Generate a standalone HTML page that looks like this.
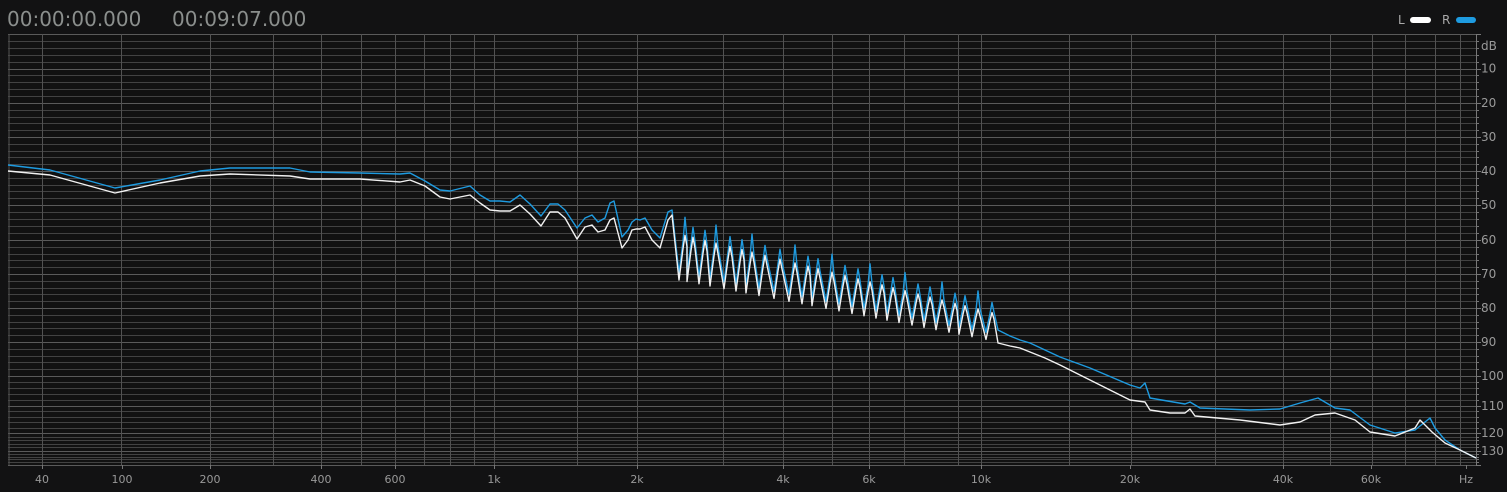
<!DOCTYPE html>
<html><head><meta charset="utf-8"><style>
html,body{margin:0;padding:0;background:#121213;width:1507px;height:492px;overflow:hidden;font-family:"DejaVu Sans","Liberation Sans",sans-serif}
.t{position:absolute;top:7px;font-size:20px;color:#8b8f8d;font-family:"DejaVu Sans",sans-serif}
</style></head><body>
<div class="t" style="left:7px">00:00:00.000</div>
<div class="t" style="left:172px">00:09:07.000</div>
<svg id="s" width="1507" height="492" style="position:absolute;left:0;top:0"></svg>
<script>
const s=document.getElementById('s');let h='';
const dbm=[[0,34],[10,68.5],[20,103],[30,137],[40,171],[50,205],[60,240],[70,274],[80,308],[90,342],[100,376],[110,406],[120,433],[130,451],[140,465]];
function dy(d){for(let i=0;i<dbm.length-1;i++){const[a,b]=dbm[i],[c,e]=dbm[i+1];if(d<=c)return b+(e-b)*(d-a)/(c-a);}return 465;}
h+='<rect x="8" y="34" width="1468" height="431" fill="#111111"/>';
for(let d=0;d<=140;d+=2){const y=Math.round(dy(d))+.5;h+=`<line x1="8" x2="1476" y1="${y}" y2="${y}" stroke="${d%10==0?'#5a5a5a':'#424242'}" stroke-width="1"/>`;}
[8.5,42,121,210,273,321,361,395,424,450,474,494,577,637,723,783,832,869,904,958,981,1069,1131,1215,1283,1330,1372,1405,1435,1460].forEach(x=>{h+=`<line x1="${x+.5}" x2="${x+.5}" y1="34" y2="465" stroke="#525252"/>`});
h+='<line x1="1476.5" x2="1476.5" y1="34" y2="465" stroke="#777"/>';
for(let d=0;d<=140;d+=2){const y=Math.round(dy(d))+.5;h+=`<line x1="1476" x2="${d%10==0?1481:1479}" y1="${y}" y2="${y}" stroke="#777"/>`;}
h+='<text x="1481" y="50" fill="#9a9a9a" font-size="12">dB</text>';
for(let d=10;d<=130;d+=10)h+=`<text x="1481" y="${dy(d)+4}" fill="#9a9a9a" font-size="12">${d}</text>`;
[[42,'40'],[122,'100'],[210,'200'],[321,'400'],[395,'600'],[494,'1k'],[637,'2k'],[783,'4k'],[869,'6k'],[981,'10k'],[1130,'20k'],[1283,'40k'],[1371,'60k'],[1466,'Hz']].forEach(([x,t])=>{h+=`<text x="${x}" y="483" fill="#999" font-size="11" text-anchor="middle">${t}</text>`;h+=`<line x1="${x+.5}" x2="${x+.5}" y1="465" y2="469" stroke="#777"/>`});
h+='<text x="1398" y="24" fill="#aaa" font-size="12">L</text><rect x="1410" y="17" width="21" height="6" rx="3" fill="#fff"/>';
h+='<text x="1442" y="24" fill="#aaa" font-size="12">R</text><rect x="1456" y="17" width="20" height="6" rx="3" fill="#1e9be0"/>';
const wA=[[8,171],[50,175],[115,193],[160,183],[200,176],[230,174],[290,176],[310,179],[360,179],[400,182],[410,180],[425,186],[440,197],[450,199],[470,195],[480,203],[490,210],[500,211],[510,211],[520,205],[530,214],[541,226],[550,212],[558,212],[565,218],[577,239],[585,227],[592,225],[598,232],[605,230],[610,220],[614,218],[622,248],[628,240],[632,230],[636,229],[640,229],[645,227],[652,240],[660,248],[668,220],[672,215]];
const bA=[[8,165],[50,170],[115,188],[160,180],[200,171],[230,168],[290,168],[310,172],[360,173],[400,174],[410,173],[425,181],[440,190],[450,191],[470,186],[480,195],[490,201],[500,201],[510,202],[520,195],[530,204],[541,216],[550,204],[558,204],[565,210],[577,228],[585,218],[592,215],[598,222],[605,218],[610,203],[614,201],[622,237],[628,230],[632,222],[636,219],[640,220],[645,218],[652,230],[660,238],[668,212],[672,210]];
const pk=[685,693,705,716,730,742,752,765,780,795,808,818,832,845,858,870,882,893,905,918,930,942,955,965,978,992];
const wB=[],bB=[];
for(let i=0;i<pk.length;i++){const x=pk[i],f=(x-680)/310;const tr=275+60*f,ph=45-18*f;const xt=x-6;
wB.push([xt,tr+4]);wB.push([x-2,tr+4-ph*0.7]);wB.push([x,tr+4-ph]);wB.push([x+2,tr+4-ph*0.75]);
bB.push([xt,tr-3]);bB.push([x-2,tr-3-ph*0.7]);bB.push([x,tr-6-ph-(i%3==0?8:0)]);bB.push([x+2,tr-3-ph*0.75]);}
const wC=[[998,343],[1010,346],[1020,348],[1030,352],[1045,358],[1060,365],[1090,380],[1110,390],[1130,400],[1145,402],[1150,410],[1170,413],[1185,413],[1190,409],[1195,416],[1240,420],[1280,425],[1300,422],[1315,415],[1335,413],[1355,420],[1370,432],[1395,436],[1415,428],[1420,420],[1432,432],[1445,443],[1460,450],[1476,458]];
const bC=[[998,330],[1010,336],[1020,340],[1030,343],[1045,350],[1060,357],[1090,368],[1130,385],[1140,388],[1145,383],[1150,398],[1185,404],[1190,402],[1200,408],[1250,410],[1280,409],[1300,403],[1318,398],[1335,408],[1350,410],[1370,425],[1395,433],[1415,430],[1430,418],[1435,428],[1445,440],[1460,450],[1476,458]];
const P=a=>a.map(p=>p[0]+','+p[1].toFixed(1)).join(' ');
h+=`<polyline points="${P([...bA,...bB,...bC])}" fill="none" stroke="#1e9be0" stroke-width="1.4" stroke-linejoin="round"/>`;
h+=`<polyline points="${P([...wA,...wB,...wC])}" fill="none" stroke="#f2f2f2" stroke-width="1.4" stroke-linejoin="round"/>`;
s.innerHTML=h;
</script>
</body></html>
